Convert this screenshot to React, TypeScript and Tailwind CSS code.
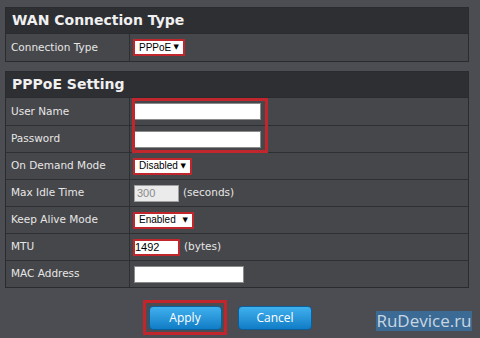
import React from 'react';

const font = { fontFamily: '"DejaVu Sans", Verdana, sans-serif' };
const arial = { fontFamily: '"Liberation Sans", Arial, sans-serif' };

const Row: React.FC<{ label: string; children?: React.ReactNode; first?: boolean }> = ({ label, children, first }) => (
  <div className={`flex h-[27px] bg-[#46474b] ${first ? '' : 'border-t border-[#2e2f33]'}`}>
    <div className="w-[124px] shrink-0 border-r border-[#2e2f33] pl-[5px] flex items-center text-[10.5px] text-[#e6e6e6]">{label}</div>
    <div className="flex items-center pl-[3px] gap-[4px]">{children}</div>
  </div>
);

const Select: React.FC<{ value: string; w: string }> = ({ value, w }) => (
  <div className={`${w} h-[17px] border-2 border-[#c0262c] bg-white flex items-center justify-between pl-[4px] pr-[4px]`}>
    <span className="text-[10px] text-black leading-none" style={arial}>{value}</span>
    <span className="text-[7px] text-black leading-none">▼</span>
  </div>
);

const Header: React.FC<{ title: string }> = ({ title }) => (
  <div className="h-[25px] bg-[#2e2f33] flex items-center pl-[6px] text-[14px] font-bold text-[#f0f0f0]">{title}</div>
);

export default function App() {
  return (
    <div className="w-[480px] h-[338px] bg-[#4b4d52] pt-[7px] pl-[5px] relative overflow-hidden" style={font}>
      <div className="w-[464px] border border-[#2a2b2e]">
        <Header title="WAN Connection Type" />
        <div className="border-t border-[#2a2b2e]">
          <Row label="Connection Type" first>
            <Select value="PPPoE" w="w-[52px]" />
          </Row>
        </div>
      </div>

      <div className="w-[464px] border border-[#2a2b2e] mt-[9px] relative">
        <Header title="PPPoE Setting" />
        <div className="border-t border-[#2a2b2e]">
          <Row label="User Name" first>
            <div className="w-[127px] h-[17px] ml-[1px] bg-white border border-[#8a8a8a]" />
          </Row>
          <Row label="Password">
            <div className="w-[127px] h-[17px] ml-[1px] bg-white border border-[#8a8a8a]" />
          </Row>
          <Row label="On Demand Mode">
            <Select value="Disabled" w="w-[59px]" />
          </Row>
          <Row label="Max Idle Time">
            <div className="w-[45px] h-[17px] ml-[1px] bg-[#ebebeb] border border-[#a0a0a0] flex items-center pl-[2px] text-[11px] text-[#8a8a8a]" style={arial}>300</div>
            <span className="text-[10.5px] text-[#e6e6e6]">(seconds)</span>
          </Row>
          <Row label="Keep Alive Mode">
            <Select value="Enabled" w="w-[61px]" />
          </Row>
          <Row label="MTU">
            <div className="w-[47px] h-[17px] border-2 border-[#c0262c] bg-white flex items-center text-[11px] text-black" style={arial}>1492</div>
            <span className="text-[10.5px] text-[#e6e6e6]">(bytes)</span>
          </Row>
          <Row label="MAC Address">
            <div className="w-[110px] h-[17px] ml-[1px] bg-white border border-[#8a8a8a]" />
          </Row>
        </div>
        <div className="absolute left-[126px] top-[26px] w-[136px] h-[55px] border-[3px] border-[#c0262c]" />
      </div>

      <div className="flex gap-[11px] ml-[138px] mt-[12px]">
        <div className="w-[84px] h-[35px] border-[3px] border-[#c0262c] flex items-center justify-center">
          <button className="w-[73px] h-[24px] rounded-[4px] bg-gradient-to-b from-[#3fb1ee] to-[#0f7cc6] border border-[#0b5f9a] text-white text-[12px]" style={{ fontFamily: '"Open Sans", sans-serif' }}>Apply</button>
        </div>
        <div className="flex items-center">
          <button className="w-[74px] h-[24px] rounded-[4px] bg-gradient-to-b from-[#3fb1ee] to-[#0f7cc6] border border-[#0b5f9a] text-white text-[12px]" style={{ fontFamily: '"Open Sans", sans-serif' }}>Cancel</button>
        </div>
      </div>

      <div className="absolute left-[376px] top-[311px] w-[96px] h-[20px] bg-[#3b6b95] flex items-center justify-center text-[17px] text-[#c9d6e2]" style={{ fontFamily: '"Open Sans", sans-serif' }}>RuDevice.ru</div>
    </div>
  );
}
